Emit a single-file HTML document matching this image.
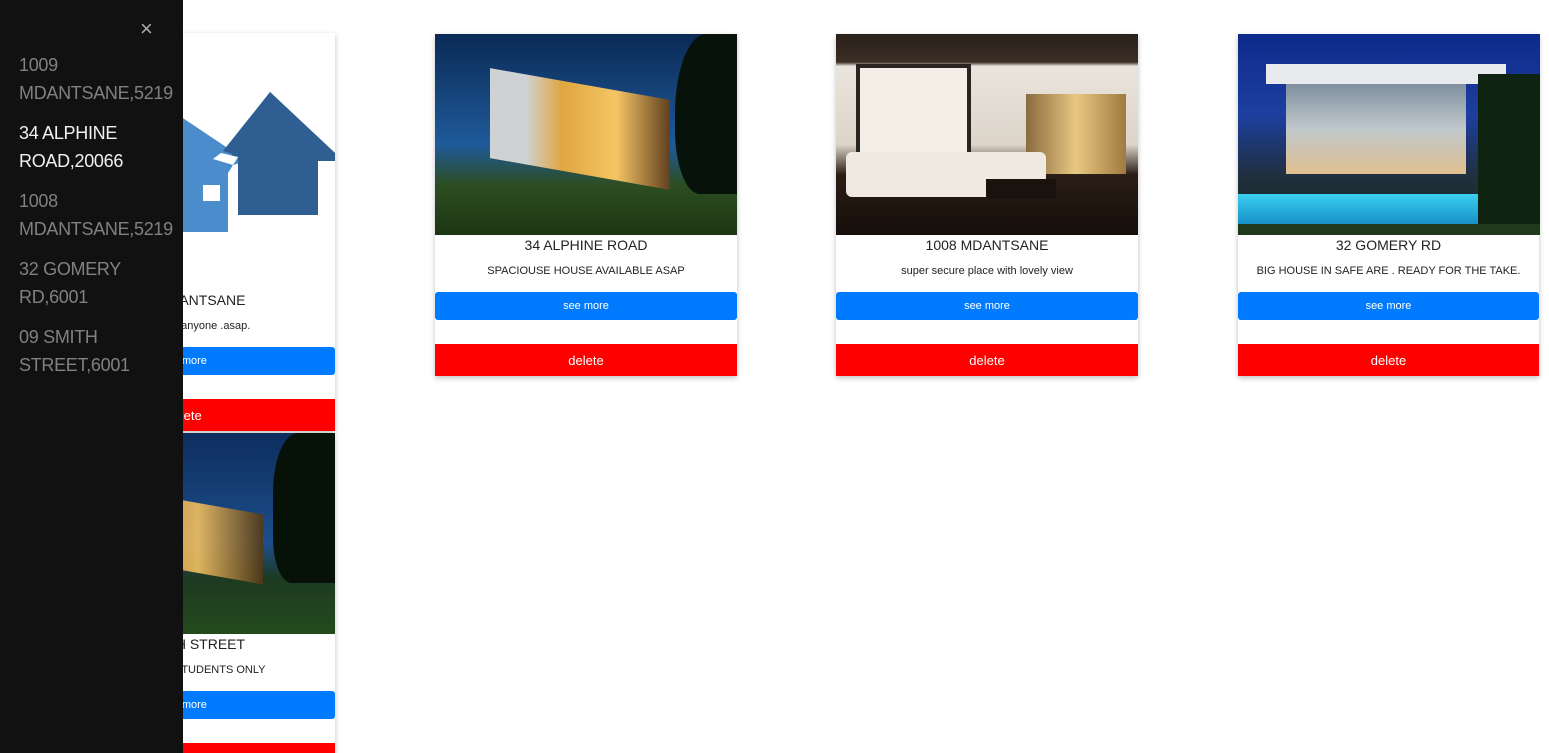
<!DOCTYPE html>
<html><head><meta charset="utf-8"><style>
*{box-sizing:border-box;margin:0;padding:0}
html,body{width:1549px;height:753px;overflow:hidden}
body{background:#fff;font-family:"Segoe UI","Liberation Sans",sans-serif;position:relative}
.card{position:absolute;width:302px;background:#fff;box-shadow:0 2px 5px rgba(0,0,0,.25)}
.img{position:relative;width:302px;height:201px;overflow:hidden}
.t{text-align:center;font-size:14px;color:#222;height:22px;line-height:22px;margin-top:-1px;white-space:nowrap}
.d{text-align:center;font-size:11px;color:#222;height:36px;line-height:30px;white-space:nowrap}
.btn{height:28px;background:#007bff;color:#fff;border-radius:3px;text-align:center;font-size:11px;line-height:29px}
.gap{height:24px}
.del{height:32px;background:#f00;color:#fff;text-align:center;font-size:13px;line-height:33px}
.side{position:absolute;left:0;top:0;width:183px;height:753px;background:#111;z-index:5}
.side .x{position:absolute;left:140px;top:16px;color:#aaa;font-size:22px}
.side a{position:absolute;left:19px;font-size:18px;line-height:28px;color:#818181;font-family:"Liberation Sans",sans-serif;letter-spacing:-.3px}
</style></head><body>
<div class="side">
<div class="x">×</div>
<a style="top:51px">1009<br>MDANTSANE,5219</a>
<a style="top:119px;color:#f1f1f1">34 ALPHINE<br>ROAD,20066</a>
<a style="top:187px">1008<br>MDANTSANE,5219</a>
<a style="top:255px">32 GOMERY<br>RD,6001</a>
<a style="top:323px">09 SMITH<br>STREET,6001</a>
</div>

<div class="card" style="left:33px;top:33px">
<div class="img" style="height:257px;background:#fff">
<svg width="302" height="257" viewBox="0 0 302 257"><polygon points="105,55 214,128 200,132 195,140 195,199 120,199 120,180 90,180 90,110" fill="#4a8ccc"/><rect x="170" y="152" width="17" height="16" fill="#fff"/><polygon points="195,128 237,59 302,120 302,128 285,128 285,182 205,182 205,123" fill="#2f5f92"/><polygon points="237,59 302,120 302,128 285,128 285,182 205,182 205,123 190,118" fill="#2f5f92"/><polygon points="188,120 205,124 200,132 180,126" fill="#fff"/></svg>
</div>
<div class="t">1009 MDANTSANE</div>
<div class="d">Available for anyone .asap.</div>
<div class="btn">see more</div><div class="gap"></div><div class="del">delete</div>
</div>

<div class="card" style="left:33px;top:433px">
<div class="img" style="background:linear-gradient(#0d2d5e,#1d4f8c 55%,#1d3a22 72%,#244a1c)">
<div style="position:absolute;left:100px;top:70px;width:130px;height:70px;background:linear-gradient(90deg,#c88a30,#f2c060,#503818);opacity:.9;transform:skewY(10deg)"></div>
<div style="position:absolute;left:240px;top:0;width:62px;height:150px;background:#061208;border-radius:40% 0 0 30%"></div>
</div>
<div class="t">09 SMITH STREET</div>
<div class="d">FOR SENIOR STUDENTS ONLY</div>
<div class="btn">see more</div><div class="gap"></div><div class="del">delete</div>
</div>

<div class="card" style="left:435px;top:34px">
<div class="img" style="background:linear-gradient(#0a2a55,#1f5a9a 55%,#2c4d22 75%,#1c3612)">
<div style="position:absolute;left:55px;top:50px;width:180px;height:90px;background:linear-gradient(90deg,#cfd2d4 20%,#e0a640 40%,#f5c565 70%,#604020);transform:skewY(10deg)"></div>
<div style="position:absolute;left:240px;top:0;width:62px;height:160px;background:#07130a;border-radius:50% 0 0 40%"></div>
</div>
<div class="t">34 ALPHINE ROAD</div>
<div class="d">SPACIOUSE HOUSE AVAILABLE ASAP</div>
<div class="btn">see more</div><div class="gap"></div><div class="del">delete</div>
</div>

<div class="card" style="left:836px;top:34px">
<div class="img" style="background:linear-gradient(#2a201a 0,#3a2e25 14%,#e9e4dc 16%,#ddd5ca 55%,#2a1d15 70%,#150e0a)">
<div style="position:absolute;left:20px;top:30px;width:115px;height:120px;background:#f4efe6;border:4px solid #2a2420"></div>
<div style="position:absolute;left:190px;top:60px;width:100px;height:80px;background:linear-gradient(90deg,#8a6a40,#e8c880,#a07a40)"></div>
<div style="position:absolute;left:10px;top:118px;width:200px;height:45px;background:#efe9df;border-radius:6px"></div>
<div style="position:absolute;left:150px;top:145px;width:70px;height:20px;background:#1a120c"></div>
</div>
<div class="t">1008 MDANTSANE</div>
<div class="d">super secure place with lovely view</div>
<div class="btn">see more</div><div class="gap"></div><div class="del">delete</div>
</div>

<div class="card" style="left:1238px;top:34px;width:301px">
<div class="img" style="background:linear-gradient(#0d2a8a,#1d3fa0 40%,#203040 70%,#142a18)">
<div style="position:absolute;left:28px;top:30px;width:240px;height:20px;background:#e8eaee"></div>
<div style="position:absolute;left:48px;top:50px;width:180px;height:90px;background:linear-gradient(#8090a0,#c0c8cc 50%,#e0c090)"></div>
<div style="position:absolute;left:0;top:160px;width:240px;height:30px;background:linear-gradient(#3ad0f0,#1890c8)"></div>
<div style="position:absolute;left:240px;top:40px;width:62px;height:161px;background:#0f2410"></div>
<div style="position:absolute;left:0;top:190px;width:302px;height:11px;background:#1f3a1a"></div>
</div>
<div class="t">32 GOMERY RD</div>
<div class="d">BIG HOUSE IN SAFE ARE . READY FOR THE TAKE.</div>
<div class="btn">see more</div><div class="gap"></div><div class="del">delete</div>
</div>
</body></html>
